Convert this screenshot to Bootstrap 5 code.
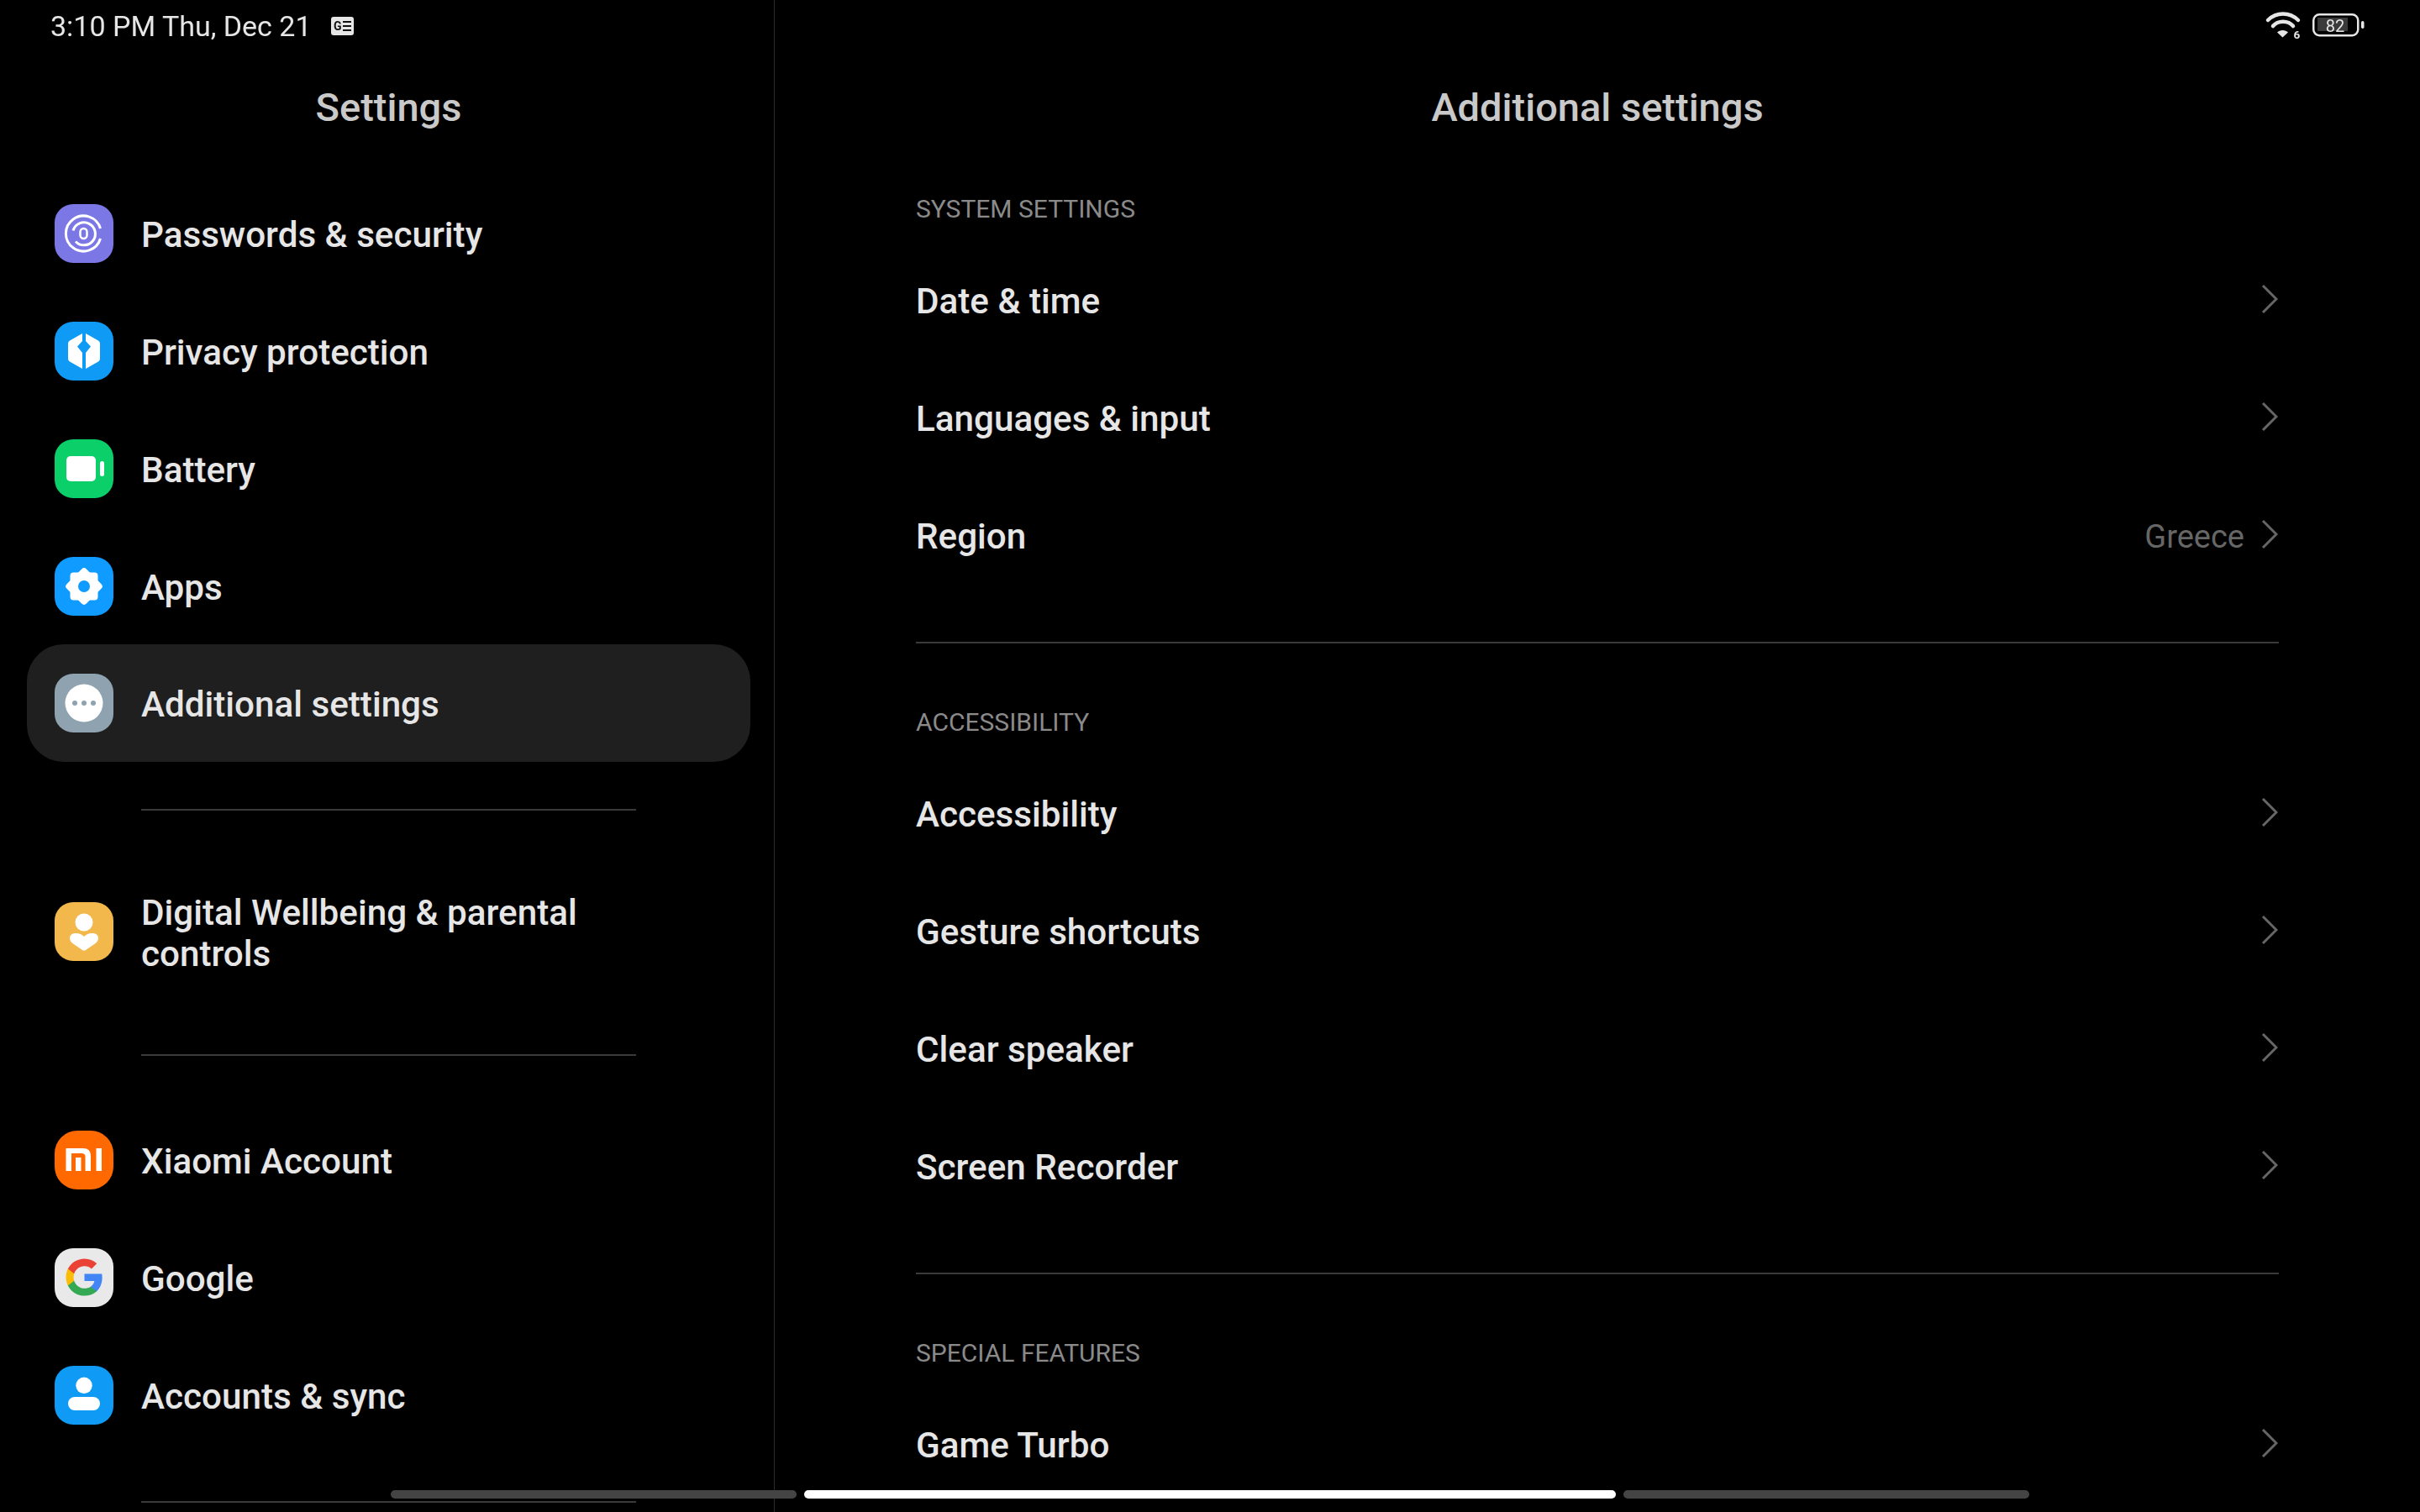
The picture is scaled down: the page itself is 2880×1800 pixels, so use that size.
<!DOCTYPE html>
<html lang="en">
<head>
<meta charset="utf-8">
<title>Additional settings</title>
<link href="https://cdn.jsdelivr.net/npm/bootstrap@5.3.0/dist/css/bootstrap.min.css" rel="stylesheet">
<style>
html,body{height:1800px;overflow:hidden;background:#000;}
body{font-family:Roboto,"Liberation Sans",sans-serif;color:#e6e6e6;}
.status-strip{height:62px;padding:0 66px 0 60px;z-index:5;pointer-events:none;}
.status-clock{font-size:34px;line-height:62px;color:#e6e6e6;}
.status-note{width:27px;height:22px;margin-left:23px;}
.status-wifi{width:44px;height:34px;margin-right:13px;overflow:visible;}
.status-batt{width:62px;height:30px;overflow:visible;}
.stext{font-family:Roboto,"Liberation Sans",sans-serif;}
.pane-side{width:922px;flex:none;border-right:1px solid #2b2b2b;height:1800px;}
.pane-main{flex:1 1 auto;min-width:0;height:1800px;padding:0 168px;}
.pane-title{height:208px;padding-top:48px;margin:0;font-size:47px;font-weight:500;line-height:160px;color:#c9c9c9;text-align:center;}
.pane-title.side-title{padding-left:4px;}
.side-list{margin:0 28px 0 32px;}
.side-row{height:140px;padding:0 33px;gap:33px;background:transparent;border:0;color:#e6e6e6;font-size:42.200px;font-weight:500;line-height:49.500px;}
.side-row.active{background:#1f1f1f;color:#e6e6e6;border:0;border-radius:44px;}
.side-row.tall{height:180px;}
.side-text{padding-top:4px;}
.side-wrap{width:560px;}
.app-glyph{width:70px;height:70px;flex:none;display:block;}
.side-rule{margin:56px 136px 54px 168px;border:0;border-top:2px solid #3a3a3a;opacity:1;width:589px;}
.sect-label{height:80px;line-height:81px;font-size:30px;color:#8a8a8a;font-weight:400;text-transform:uppercase;}
.main-row{height:140px;padding:0;background:transparent;border:0;color:#e6e6e6;font-size:42.200px;font-weight:500;}
.main-text{padding-top:2px;}
.main-hint{color:#666;font-weight:400;font-size:38px;margin-right:20px;padding-top:2px;}
.chev{width:20px;height:36px;margin:0 1px 4px 0;flex:none;display:block;}
.main-rule{margin:56px 0 53px;border:0;border-top:2px solid #3a3a3a;opacity:1;}
.gesture-strip{bottom:16px;left:465px;width:1950px;height:10px;gap:9px;z-index:6;}
.gest-dim{flex:1 1 0;background:#444;border-radius:5px;}
.gest-lit{width:966px;flex:none;background:#fff;border-radius:5px;}
</style>
</head>
<body>
<div class="status-strip position-fixed top-0 start-0 end-0 d-flex align-items-center">
  <span class="status-clock">3:10 PM Thu, Dec 21</span>
  <svg class="status-note" viewBox="0 0 27 22"><rect width="27" height="22" rx="3" fill="#e6e6e6"/><text class="stext" x="3" y="16" font-size="14" font-weight="700" fill="#111">G</text><path d="M14 6h10M14 11h10M14 16h10" stroke="#111" stroke-width="2"/></svg>
  <span class="flex-grow-1"></span>
  <svg class="status-wifi" viewBox="0 0 44 34"><g fill="none" stroke="#e6e6e6" stroke-width="4.500" stroke-linecap="round"><path d="M4 10C14 0 30 0 40 10"/><path d="M10 17C16 10 28 10 34 17"/></g><path d="M21.500 30.500L15 24.500C18 21 25 21 28 24.500Z" fill="#e6e6e6"/><text class="stext" x="34.500" y="32" font-size="13.500" font-weight="700" fill="#e6e6e6">6</text></svg>
  <svg class="status-batt" viewBox="0 0 62 30"><rect x="1.250" y="1.250" width="53" height="25" rx="7" fill="none" stroke="#e6e6e6" stroke-width="2.500"/><rect x="6" y="5" width="36" height="16" fill="#3a3a3a"/><text class="stext" x="27" y="22" text-anchor="middle" font-size="20" fill="#e6e6e6">82</text><rect x="58" y="9" width="3.500" height="9" rx="1.700" fill="#e6e6e6"/></svg>
</div>

<main class="d-flex">
  <aside class="pane-side">
    <h1 class="pane-title side-title">Settings</h1>
    <div class="list-group side-list">
      <a class="list-group-item side-row d-flex align-items-center">
        <svg class="app-glyph" viewBox="0 0 70 70"><rect width="70" height="70" rx="22" fill="#7b78e6"/><g fill="none" stroke="#fff" stroke-width="3"><path d="M54.500 29A21 21 0 1 0 54.500 41"/><path d="M22 31.500A13.500 13.500 0 1 1 25 44.500"/><rect x="30.500" y="29" width="8" height="12" rx="4" stroke-width="2.500"/></g></svg>
        <span class="side-text">Passwords &amp; security</span>
      </a>
      <a class="list-group-item side-row d-flex align-items-center">
        <svg class="app-glyph" viewBox="0 0 70 70"><rect width="70" height="70" rx="22" fill="#0f9bf5"/><path d="M33 14L18 22.500Q16 23.700 16 26V44Q16 46.300 18 47.500L33 56V37L27 29.500L33 23Z" fill="#fff"/><path d="M37 14L52 22.500Q54 23.700 54 26V44Q54 46.300 52 47.500L37 56V37L43 29.500L37 23Z" fill="#fff"/></svg>
        <span class="side-text">Privacy protection</span>
      </a>
      <a class="list-group-item side-row d-flex align-items-center">
        <svg class="app-glyph" viewBox="0 0 70 70"><rect width="70" height="70" rx="22" fill="#0bd06a"/><rect x="14" y="20" width="35" height="30" rx="5" fill="#fff"/><rect x="54" y="26" width="5" height="18" rx="2.500" fill="#fff"/></svg>
        <span class="side-text">Battery</span>
      </a>
      <a class="list-group-item side-row d-flex align-items-center">
        <svg class="app-glyph" viewBox="0 0 70 70"><rect width="70" height="70" rx="22" fill="#0f9bff"/><g fill="#fff"><rect x="18.500" y="18.500" width="33" height="33" rx="4"/><rect x="18.500" y="18.500" width="33" height="33" rx="4" transform="rotate(45 35 35)"/></g><circle cx="35" cy="35" r="7" fill="#0f9bff"/></svg>
        <span class="side-text">Apps</span>
      </a>
      <a class="list-group-item side-row active d-flex align-items-center">
        <svg class="app-glyph" viewBox="0 0 70 70"><rect width="70" height="70" rx="22" fill="#8fa2b0"/><circle cx="35" cy="35" r="22.500" fill="#fff"/><g fill="#8fa2b0"><circle cx="24" cy="35" r="3"/><circle cx="35" cy="35" r="3"/><circle cx="46" cy="35" r="3"/></g></svg>
        <span class="side-text">Additional settings</span>
      </a>
    </div>
    <hr class="side-rule">
    <div class="list-group side-list">
      <a class="list-group-item side-row tall d-flex align-items-center">
        <svg class="app-glyph" viewBox="0 0 70 70"><rect width="70" height="70" rx="22" fill="#f2b84b"/><circle cx="35" cy="24" r="10.500" fill="#fff"/><path d="M35 41C32 37.500 28 36.500 24 37C20 37.500 18 40 18 43C18 46 20 48 22 49.500L33 57Q35 58.300 37 57L48 49.500C50 48 52 46 52 43C52 40 50 37.500 46 37C42 36.500 38 37.500 35 41Z" fill="#fff"/></svg>
        <span class="side-text side-wrap">Digital Wellbeing &amp; parental controls</span>
      </a>
    </div>
    <hr class="side-rule">
    <div class="list-group side-list">
      <a class="list-group-item side-row d-flex align-items-center">
        <svg class="app-glyph" viewBox="0 0 70 70"><rect width="70" height="70" rx="27" fill="#ff6900"/><path d="M13.500 21H34Q43 21 43 30V48H36.500V31Q36.500 27 32 27H20V48H13.500ZM25 32H31.500V48H25ZM49.500 21H56V48H49.500Z" fill="#fff"/></svg>
        <span class="side-text">Xiaomi Account</span>
      </a>
      <a class="list-group-item side-row d-flex align-items-center">
        <svg class="app-glyph" viewBox="0 0 70 70"><rect width="70" height="70" rx="22" fill="#e9e9e9"/><g transform="translate(11.500 10.500)"><path fill="#4285F4" d="M45.120 24.500c0-1.560-.14-3.060-.4-4.500H24v8.510h11.840c-.51 2.750-2.060 5.080-4.390 6.640v5.520h7.110c4.160-3.830 6.560-9.470 6.560-16.170z"/><path fill="#34A853" d="M24 46c5.940 0 10.920-1.970 14.560-5.330l-7.110-5.520c-1.970 1.320-4.490 2.100-7.450 2.100-5.730 0-10.580-3.870-12.310-9.070H4.340v5.700C7.960 41.070 15.400 46 24 46z"/><path fill="#FBBC05" d="M11.690 28.180C11.250 26.860 11 25.450 11 24s.25-2.860.69-4.180v-5.700H4.340C2.850 17.090 2 20.450 2 24c0 3.550.85 6.910 2.340 9.880l7.350-5.700z"/><path fill="#EA4335" d="M24 10.750c3.230 0 6.130 1.110 8.410 3.290l6.310-6.310C34.910 4.180 29.930 2 24 2 15.400 2 7.960 6.930 4.340 14.120l7.350 5.700c1.730-5.200 6.580-9.070 12.310-9.070z"/></g></svg>
        <span class="side-text">Google</span>
      </a>
      <a class="list-group-item side-row d-flex align-items-center">
        <svg class="app-glyph" viewBox="0 0 70 70"><rect width="70" height="70" rx="22" fill="#0f9bf5"/><circle cx="35" cy="23.300" r="9.700" fill="#fff"/><rect x="16" y="37" width="38" height="16" rx="8" fill="#fff"/></svg>
        <span class="side-text">Accounts &amp; sync</span>
      </a>
    </div>
    <hr class="side-rule">
  </aside>

  <section class="pane-main">
    <h2 class="pane-title">Additional settings</h2>

    <div class="sect-label">System settings</div>
    <div class="list-group">
      <a class="list-group-item main-row d-flex align-items-center"><span class="main-text flex-grow-1">Date &amp; time</span><svg class="chev" viewBox="0 0 20 36"><path d="M2 2L18 18L2 34" fill="none" stroke="#666" stroke-width="3"/></svg></a>
      <a class="list-group-item main-row d-flex align-items-center"><span class="main-text flex-grow-1">Languages &amp; input</span><svg class="chev" viewBox="0 0 20 36"><path d="M2 2L18 18L2 34" fill="none" stroke="#666" stroke-width="3"/></svg></a>
      <a class="list-group-item main-row d-flex align-items-center"><span class="main-text flex-grow-1">Region</span><span class="main-hint">Greece</span><svg class="chev" viewBox="0 0 20 36"><path d="M2 2L18 18L2 34" fill="none" stroke="#666" stroke-width="3"/></svg></a>
    </div>
    <hr class="main-rule">

    <div class="sect-label">Accessibility</div>
    <div class="list-group">
      <a class="list-group-item main-row d-flex align-items-center"><span class="main-text flex-grow-1">Accessibility</span><svg class="chev" viewBox="0 0 20 36"><path d="M2 2L18 18L2 34" fill="none" stroke="#666" stroke-width="3"/></svg></a>
      <a class="list-group-item main-row d-flex align-items-center"><span class="main-text flex-grow-1">Gesture shortcuts</span><svg class="chev" viewBox="0 0 20 36"><path d="M2 2L18 18L2 34" fill="none" stroke="#666" stroke-width="3"/></svg></a>
      <a class="list-group-item main-row d-flex align-items-center"><span class="main-text flex-grow-1">Clear speaker</span><svg class="chev" viewBox="0 0 20 36"><path d="M2 2L18 18L2 34" fill="none" stroke="#666" stroke-width="3"/></svg></a>
      <a class="list-group-item main-row d-flex align-items-center"><span class="main-text flex-grow-1">Screen Recorder</span><svg class="chev" viewBox="0 0 20 36"><path d="M2 2L18 18L2 34" fill="none" stroke="#666" stroke-width="3"/></svg></a>
    </div>
    <hr class="main-rule">

    <div class="sect-label">Special features</div>
    <div class="list-group">
      <a class="list-group-item main-row d-flex align-items-center"><span class="main-text flex-grow-1">Game Turbo</span><svg class="chev" viewBox="0 0 20 36"><path d="M2 2L18 18L2 34" fill="none" stroke="#666" stroke-width="3"/></svg></a>
    </div>
  </section>
</main>

<div class="gesture-strip position-fixed d-flex">
  <span class="gest-dim"></span><span class="gest-lit"></span><span class="gest-dim"></span>
</div>
<script src="https://cdn.jsdelivr.net/npm/bootstrap@5.3.0/dist/js/bootstrap.bundle.min.js"></script>
</body>
</html>
